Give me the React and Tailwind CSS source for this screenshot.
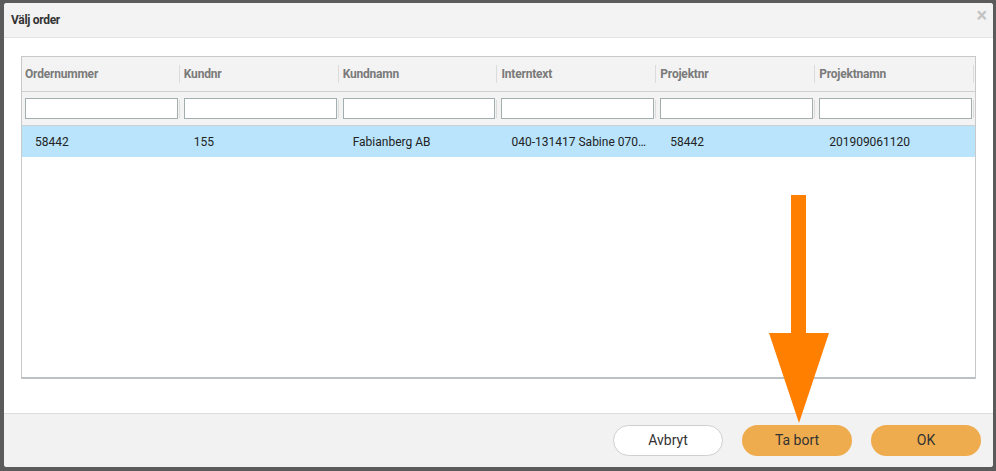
import React from "react";

const cols = ["Ordernummer", "Kundnr", "Kundnamn", "Interntext", "Projektnr", "Projektnamn"];
const row = ["58442", "155", "Fabianberg AB", "040-131417 Sabine 070…", "58442", "201909061120"];

export default function App() {
  return (
    <div
      className="relative w-[996px] h-[471px] bg-[#5b5b5b] pt-[3px] pl-[4px] overflow-hidden"
      style={{ fontFamily: "Roboto, 'Liberation Sans', sans-serif" }}
    >
      <div className="w-[989px] h-[464px] bg-white rounded-[3px] flex flex-col overflow-hidden">
        {/* header */}
        <div className="h-[35px] shrink-0 bg-[#f3f3f3] border-b border-[#e3e3e3] flex items-center justify-between pl-[7px] pr-[6px]">
          <span className="text-[12px] font-bold text-[#333] tracking-[-0.3px]">Välj order</span>
          <span className="text-[20px] font-bold text-[#c4c4c4] leading-none -mt-[10px]">×</span>
        </div>
        {/* body */}
        <div className="flex-1 pt-[18px] px-[17px]">
          <div className="w-[955px] h-[323px] border border-[#c9c9c9] border-b-2 border-b-[#bcc0c2] flex flex-col">
            <div className="grid grid-cols-6 h-[35px] bg-[#f3f3f3] border-b border-[#cdd0d0]">
              {cols.map((c) => (
                <div key={c} className="flex items-center relative pl-[3px]">
                  <span className="text-[12px] font-bold text-[#7a7a7a] tracking-[-0.2px]">{c}</span>
                  <span className="absolute right-[1px] top-[8px] h-[18px] w-px bg-[#dcdcdc]" />
                </div>
              ))}
            </div>
            <div className="grid grid-cols-6 h-[34px] bg-[#f3f3f3] border-b border-[#cdd0d0]">
              {cols.map((c) => (
                <div key={c} className="flex items-center relative pl-[3px] pr-[3px]">
                  <div className="w-full h-[21px] bg-white border border-[#a3aeae]" />
                  <span className="absolute right-[1px] top-[8px] h-[18px] w-px bg-[#dcdcdc]" />
                </div>
              ))}
            </div>
            <div className="grid grid-cols-6 h-[31px] bg-[#b9e4fc]">
              {row.map((v, i) => (
                <div key={i} className="flex items-center pl-[13px] text-[12px] text-[#222]">
                  {v}
                </div>
              ))}
            </div>
            <div className="flex-1 bg-white" />
          </div>
        </div>
        {/* footer */}
        <div className="h-[54px] shrink-0 bg-[#f2f2f2] border-t border-[#dedede] flex justify-end items-start pt-[11px] pr-[12px] gap-[19px]">
          <button className="w-[110px] h-[31px] rounded-full bg-white border border-[#cfcfcf] text-[14px] text-[#333]">
            Avbryt
          </button>
          <button className="w-[110px] h-[31px] rounded-full bg-[#efac4e] text-[14px] text-[#333]">
            Ta bort
          </button>
          <button className="w-[110px] h-[31px] rounded-full bg-[#efac4e] text-[14px] text-[#333]">
            OK
          </button>
        </div>
      </div>
      {/* arrow overlay */}
      <svg className="absolute left-[768px] top-[195px]" width="62" height="230" viewBox="0 0 62 230">
        <rect x="23" y="0" width="15" height="140" fill="#ff8000" />
        <polygon points="1,138 61,138 31,228" fill="#ff8000" />
      </svg>
    </div>
  );
}
